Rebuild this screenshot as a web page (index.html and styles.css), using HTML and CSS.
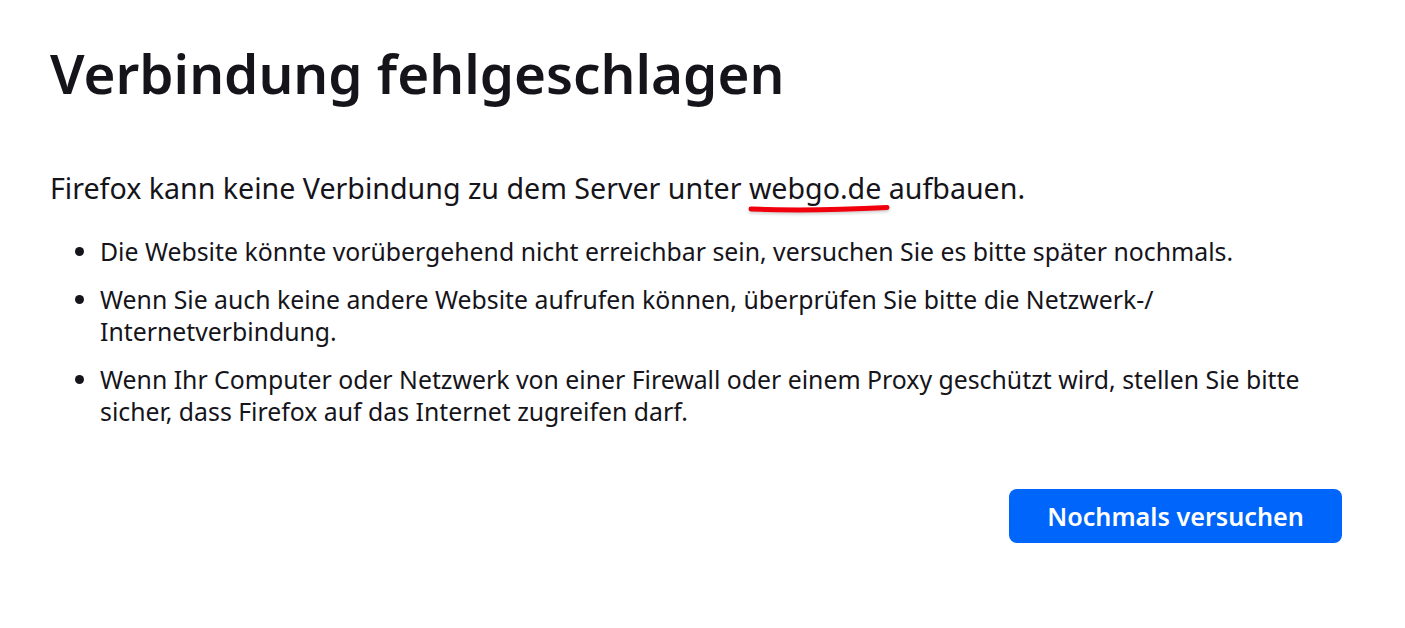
FILE: index.html
```html
<!DOCTYPE html>
<html lang="de">
<head>
<meta charset="utf-8">
<title>Verbindung fehlgeschlagen</title>
<link rel="stylesheet" href="styles.css">
</head>
<body>
<main class="container">
  <h1 class="title">Verbindung fehlgeschlagen</h1>
  <p class="lead">Firefox kann keine Verbindung zu dem Server unter <span class="host">webgo.de<svg class="mark" viewBox="0 0 146 12" width="146" height="12" aria-hidden="true"><path d="M3 7 C40 8.5 90 8 139 5.5" fill="none" stroke="#f0000c" stroke-width="5" stroke-linecap="round"/></svg></span> aufbauen.</p>
  <ul class="reasons">
    <li>Die Website könnte vorübergehend nicht erreichbar sein, versuchen Sie es bitte später nochmals.</li>
    <li>Wenn Sie auch keine andere Website aufrufen können, überprüfen Sie bitte die Netzwerk-/<br>Internetverbindung.</li>
    <li>Wenn Ihr Computer oder Netzwerk von einer Firewall oder einem Proxy geschützt wird, stellen Sie bitte sicher, dass Firefox auf das Internet zugreifen darf.</li>
  </ul>
  <div class="actions">
    <button class="primary">Nochmals versuchen</button>
  </div>
</main>
</body>
</html>
```
FILE: styles.css
```css
html, body {
  margin: 0;
  padding: 0;
  background: #ffffff;
}
body {
  font-family: "Noto Sans", "DejaVu Sans", sans-serif;
  color: #15141a;
}
.container {
  width: 1292px;
  margin-left: 50px;
  padding-top: 40px;
}
.title {
  font-size: 54.8px;
  font-weight: 600;
  line-height: 66px;
  margin: 0 0 64px 0;
}
.lead {
  font-size: 28.6px;
  line-height: 36px;
  margin: 0 0 29px 0;
}
.host {
  position: relative;
}
.mark {
  position: absolute;
  left: -1px;
  top: 34px;
  filter: drop-shadow(0 2px 1.5px rgba(0, 0, 0, 0.18));
}
.reasons {
  margin: 0;
  padding-left: 50px;
  font-size: 24.8px;
  line-height: 32px;
}
.reasons li {
  margin-bottom: 16px;
}
.actions {
  display: flex;
  justify-content: flex-end;
  margin-top: 62px;
}
.primary {
  font-family: inherit;
  font-size: 25.2px;
  font-weight: 600;
  color: #ffffff;
  background: #0065fa;
  border: none;
  border-radius: 8px;
  width: 333px;
  height: 54px;
  padding: 0;
}
```
